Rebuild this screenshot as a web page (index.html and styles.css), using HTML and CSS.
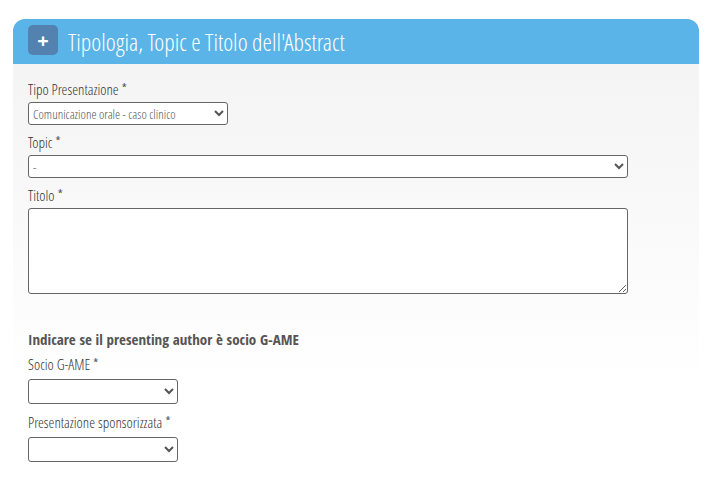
FILE: index.html
```html
<!DOCTYPE html>
<html lang="it">
<head>
    <meta charset="UTF-8">
    <meta name="viewport" content="width=device-width, initial-scale=1.0">
    <title>Tipologia, Topic e Titolo dell'Abstract</title>
    <link rel="stylesheet" href="styles.css">
</head>
<body>
    <form class="panel">
        <div class="panel-header">
            <button type="button" class="toggle">+</button>
            <h2>Tipologia, Topic e Titolo dell'Abstract</h2>
        </div>
        <div class="panel-body">
            <div class="field">
                <label for="tipo">Tipo Presentazione <sup>*</sup></label>
                <select id="tipo" class="medium">
                    <option>Comunicazione orale - caso clinico</option>
                </select>
            </div>
            <div class="field">
                <label for="topic">Topic <sup>*</sup></label>
                <select id="topic">
                    <option>-</option>
                </select>
            </div>
            <div class="field">
                <label for="titolo">Titolo <sup>*</sup></label>
                <textarea id="titolo"></textarea>
            </div>

            <h3>Indicare se il presenting author è socio G-AME</h3>
            <div class="field spaced">
                <label for="socio">Socio G-AME <sup>*</sup></label>
                <select id="socio" class="small">
                    <option></option>
                    <option>Sì</option>
                    <option>No</option>
                </select>
            </div>
            <div class="field spaced">
                <label for="sponsor">Presentazione sponsorizzata <sup>*</sup></label>
                <select id="sponsor" class="small">
                    <option></option>
                    <option>Sì</option>
                    <option>No</option>
                </select>
            </div>
        </div>
    </form>
</body>
</html>
```

FILE: styles.css
```css
* {
    box-sizing: border-box;
    margin: 0;
    padding: 0;
}

body {
    padding: 19px 24px 0 13px;
    background-color: #fff;
    color: #333;
    font-family: "Open Sans Condensed Light", "Open Sans Condensed", "Open Sans", sans-serif;
    font-size: 15px;
    font-weight: 300;
}

.panel {
    border-radius: 12px 12px 0 0;
    overflow: hidden;
}

.panel-header {
    display: flex;
    align-items: center;
    gap: 10px;
    height: 45px;
    padding: 0 15px;
    background-color: #5ab4e7;
    color: #fff;
}

.panel-header h2 {
    font-size: 24px;
    font-weight: 300;
}

.toggle {
    width: 30px;
    height: 30px;
    margin-bottom: 3px;
    border: none;
    border-radius: 5px;
    background-color: #5482b0;
    color: #fff;
    font-family: "Open Sans", sans-serif;
    font-size: 20px;
    font-weight: 700;
    line-height: 32px;
    cursor: pointer;
}

.panel-body {
    padding: 15px;
    background-image: linear-gradient(#f4f4f4, #fff 320px);
}

.field {
    display: flex;
    flex-direction: column;
    margin-bottom: 7px;
}

label {
    height: 20px;
    margin-bottom: 3px;
    line-height: 20px;
}

.spaced {
    margin-bottom: 8px;
}

.spaced label {
    margin-bottom: 5px;
}

sup {
    font-size: 15px;
    line-height: 0;
    vertical-align: 1px;
}

select,
textarea {
    width: 100%;
    max-width: 600px;
    border: 1px solid #666;
    border-radius: 3px;
    background-color: #fff;
    color: #555;
    font-family: inherit;
    font-size: 13px;
    font-weight: 300;
}

select {
    height: 23px;
}

.medium {
    max-width: 200px;
}

.small {
    max-width: 150px;
    height: 25px;
}

textarea {
    height: 86px;
    padding: 2px;
}

h3 {
    margin-top: 35px;
    margin-bottom: 5px;
    color: #555;
    font-family: "Open Sans Condensed", "Open Sans", sans-serif;
    font-size: 15px;
    font-weight: 700;
    line-height: 20px;
}
```
